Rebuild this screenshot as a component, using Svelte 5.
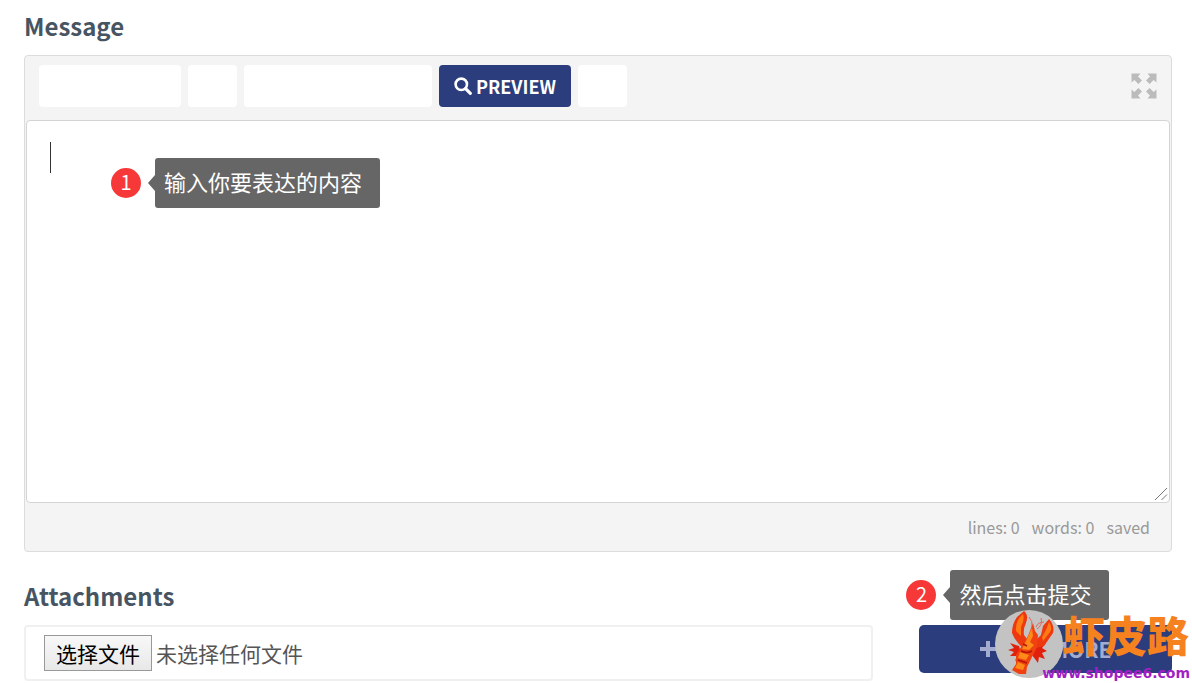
<script>
  let message = $state('');
  let files = $state();

  const blanks = ['wide', 'small', 'wider'];
  let lines = $derived(message === '' ? 0 : message.split('\n').length);
  let words = $derived(message.trim() === '' ? 0 : message.trim().split(/\s+/).length);
  let fileName = $derived(files?.length ? files[0].name : '未选择任何文件');
</script>

<main class="page">
  <label class="heading" for="message">Message</label>
  <section class="editor">
    <div class="toolbar">
      {#each blanks as size}
        <button type="button" class="tool {size}" aria-label="Format"></button>
      {/each}
      <button type="button" class="preview">
        <svg viewBox="0 0 18 18" width="18" height="18" aria-hidden="true">
          <circle cx="7.3" cy="7.3" r="5.7" fill="none" stroke="currentColor" stroke-width="2.6" />
          <path d="M11.6 11.6 16.3 16.3" stroke="currentColor" stroke-width="3.2" stroke-linecap="round" />
        </svg>
        PREVIEW
      </button>
      <button type="button" class="tool small" aria-label="Help"></button>
      <button type="button" class="expand" aria-label="Fullscreen">
        <svg viewBox="0 0 26 26" width="26" height="26" fill="currentColor" aria-hidden="true">
          {#each [0, 90, 180, 270] as angle}
            <path transform="rotate({angle} 13 13)" d="M.5 .5H9.5L7 3.4 11 7.4 7.4 11 3.4 7 .5 9.5Z" />
          {/each}
        </svg>
      </button>
    </div>
    <div class="body">
      <textarea id="message" bind:value={message}></textarea>
      {#if message === ''}
        <span class="caret"></span>
      {/if}
      <svg class="grip" viewBox="0 0 14 14" width="14" height="14" aria-hidden="true">
        <path d="M1 13 13 1M7.5 13 13 7.5" stroke="#777" />
      </svg>
      <div class="callout first">
        <span class="badge">1</span>
        <span class="bubble">输入你要表达的内容</span>
      </div>
    </div>
    <div class="status">
      <span>lines: {lines}</span>
      <span>words: {words}</span>
      <span>saved</span>
    </div>
  </section>

  <h2 class="heading">Attachments</h2>
  <div class="attachments">
    <div class="file">
      <input type="file" id="attachment" bind:files />
      <label for="attachment">
        <span class="choose">选择文件</span>
        <span>{fileName}</span>
      </label>
    </div>
    <div class="more">
      <button type="button" class="add">
        <svg viewBox="0 0 16 16" width="16" height="16" aria-hidden="true">
          <path d="M8 0V16M0 8H16" stroke="currentColor" stroke-width="4" />
        </svg>
        ADD MORE
      </button>
      <div class="callout second">
        <span class="badge">2</span>
        <span class="bubble">然后点击提交</span>
      </div>
      <div class="brand">
        <svg class="lobster" viewBox="0 0 68 68" width="68" height="68" aria-hidden="true">
          <circle cx="34" cy="34" r="34" fill="#c3c3c3" />
          <path d="M37 17Q38 11 34 7M41 17Q43 12 49 12M42 19Q48 15 46 8" fill="none" stroke="#e0685a" />
          <path d="M24 36 15 33 19 38 13 40 19 42 15 46 22 46 20 51 27 46ZM41 34 51 33 47 38 52 41 47 43 50 49 44 47 43 53 37 45Z" fill="#e0200c" />
          <path d="M29 1Q34 5 31 13 28 19 29 25L34 32 27 37Q20 31 17 23 17 14 22 7ZM54 9Q60 16 58 23L49 36 41 38 39 32 46 25 48 16Z" fill="#ee3810" />
          <path d="M28 4Q30 10 26 17L26 26 21 21Q20 11 28 4ZM54 12Q58 18 55 22L48 31 47 27 51 20Z" fill="#ff7c14" />
          <path d="M38 13 40 21 43 25 42 37 37 47 32 57 31 64 24 64 17 60 21 54 21 45 28 34 33 26Z" fill="#f04210" />
          <path d="M37 18 38 26 35 32 39 35 34 40 27 39 32 29ZM25 42 34 45 31 50 23 48ZM23 52 30 55 28 60 20 58Z" fill="#ff8a18" />
          <path d="M26 41Q32 44 37 41M23 50 32 53M28 34 32 36" fill="none" stroke="#b81408" stroke-width="1.6" />
        </svg>
        <span class="name">虾皮路</span>
        <span class="site">www.shopee6.com</span>
      </div>
    </div>
  </div>
</main>

<style>
  :global(body) {
    background: #fff;
    overflow: hidden;
  }
  .page {
    padding: 0 20px 0 24px;
    font-family: "Noto Sans CJK SC", "Noto Sans", sans-serif;
    color: #555;
  }
  button, textarea { font-family: inherit; }
  .heading {
    display: block;
    margin: 0;
    padding: 6px 0 10px;
    font-size: 24px;
    line-height: 39px;
    font-weight: 700;
    color: #475563;
  }

  /* Editor */
  .editor {
    border: 1px solid #dcdcdc;
    border-radius: 4px;
    background: #f4f4f4;
    margin-bottom: 18px;
  }
  .toolbar {
    display: flex;
    gap: 7px;
    padding: 9px 14px 13px;
  }
  .tool {
    height: 42px;
    border: 0;
    border-radius: 4px;
    background: #fff;
  }
  .wide { width: 142px; }
  .small { width: 49px; }
  .wider { width: 188px; }
  .preview {
    display: flex;
    align-items: center;
    justify-content: center;
    gap: 4px;
    width: 132px;
    height: 42px;
    padding: 0;
    border: 0;
    border-radius: 4px;
    background: #2b3d7c;
    color: #fff;
    font-size: 18px;
    font-weight: 700;
  }
  .expand {
    margin-left: auto;
    padding: 0;
    border: 0;
    background: none;
    color: #bbb;
    display: flex;
    align-items: center;
  }
  .body { position: relative; padding: 0 1px; }
  textarea {
    display: block;
    box-sizing: border-box;
    width: 100%;
    height: 383px;
    padding: 20px 24px;
    border: 1px solid #d4d4d4;
    border-radius: 4px;
    outline: 0;
    resize: vertical;
    background: #fff;
    font-size: 20px;
    line-height: 32px;
    color: #333;
  }
  textarea::-webkit-resizer { background: transparent; }
  .grip {
    position: absolute;
    right: 3px;
    bottom: 2px;
    pointer-events: none;
  }
  .caret {
    position: absolute;
    top: 22px;
    left: 25px;
    width: 1px;
    height: 31px;
    background: #333;
    pointer-events: none;
  }
  .status {
    display: flex;
    justify-content: flex-end;
    gap: 12px;
    padding: 0 21px;
    font-size: 16px;
    line-height: 48px;
    color: #999;
  }

  /* Callouts */
  .callout {
    position: absolute;
    display: flex;
    align-items: center;
    gap: 14px;
    pointer-events: none;
    white-space: nowrap;
    color: #fff;
    font-size: 22px;
  }
  .first { left: 86px; top: 38px; }
  .second { left: -13px; top: -55px; }
  .badge {
    width: 30px;
    padding-bottom: 2px;
    border-radius: 50%;
    background: #f73838;
    font-size: 20px;
    line-height: 28px;
    text-align: center;
  }
  .bubble {
    position: relative;
    padding: 0 18px 4px 9px;
    border-radius: 3px;
    background: #666;
    line-height: 46px;
  }
  .bubble::before {
    content: "";
    position: absolute;
    left: -7px;
    top: 17px;
    border: solid transparent;
    border-width: 8px 7px 8px 0;
    border-right-color: #666;
  }

  /* Attachments */
  .attachments {
    display: grid;
    grid-template-columns: 1fr 22%;
    gap: 46px;
    align-items: start;
  }
  .file {
    position: relative;
    padding: 8px 18px;
    border: 2px solid #f0f0f0;
    border-radius: 4px;
  }
  .file input {
    position: absolute;
    opacity: 0;
    width: 1px;
    height: 1px;
  }
  .file label {
    display: flex;
    align-items: center;
    gap: 4px;
    font-size: 21px;
  }
  .choose {
    padding: 0 11px;
    border: 1px solid #999;
    background: linear-gradient(#f8f8f8, #e8e8e8);
    line-height: 34px;
    color: #000;
  }
  .more { position: relative; }
  .add {
    display: flex;
    align-items: center;
    justify-content: center;
    gap: 6px;
    width: 100%;
    height: 48px;
    border: 0;
    border-radius: 5px;
    background: #2b3d7c;
    color: #a3acce;
    font-size: 21px;
    font-weight: 700;
  }
  .brand {
    position: absolute;
    right: -20px;
    top: -15px;
    width: 197px;
    height: 72px;
  }
  .lobster { display: block; }
  .name {
    position: absolute;
    right: 3px;
    top: 0;
    color: #f5821f;
    font-size: 42px;
    line-height: 48px;
    font-weight: 900;
  }
  .site {
    position: absolute;
    right: 2px;
    bottom: 0;
    color: #a11fc4;
    font-family: "DejaVu Sans", sans-serif;
    font-size: 14px;
    line-height: 18px;
    font-weight: 700;
  }
</style>
